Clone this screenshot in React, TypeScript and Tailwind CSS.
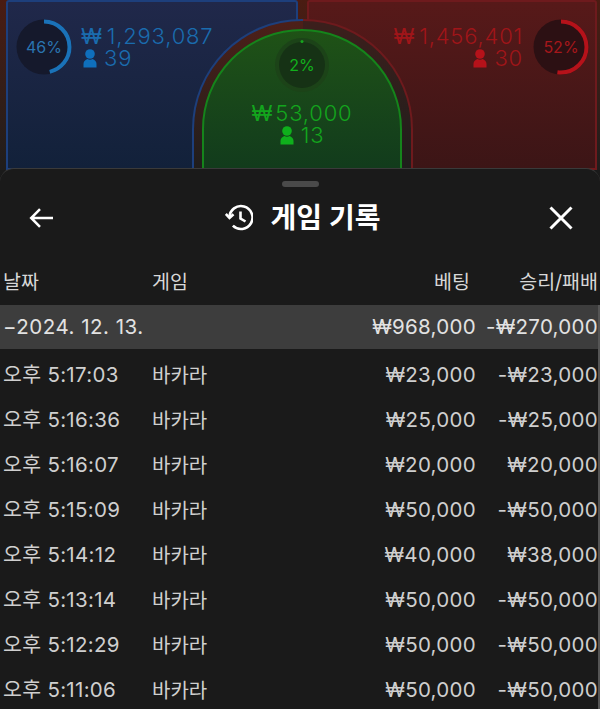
const rows = [
  ['오후 5:17:03', '₩23,000', '-₩23,000'],
  ['오후 5:16:36', '₩25,000', '-₩25,000'],
  ['오후 5:16:07', '₩20,000', '₩20,000'],
  ['오후 5:15:09', '₩50,000', '-₩50,000'],
  ['오후 5:14:12', '₩40,000', '₩38,000'],
  ['오후 5:13:14', '₩50,000', '-₩50,000'],
  ['오후 5:12:29', '₩50,000', '-₩50,000'],
  ['오후 5:11:06', '₩50,000', '-₩50,000'],
];

function Ring({ pct, color, track }: { pct: number; color: string; track: string }) {
  const r = 25.5;
  const c = 2 * Math.PI * r;
  return (
    <svg width="56" height="56" viewBox="0 0 56 56" className="block">
      <circle cx="28" cy="28" r="27.5" fill={track} />
      <circle
        cx="28"
        cy="28"
        r={r}
        fill="none"
        stroke={color}
        strokeWidth="4"
        strokeDasharray={`${(c * pct) / 100} ${c}`}
        transform="rotate(-90 28 28)"
      />
    </svg>
  );
}

function Person({ color }: { color: string }) {
  return (
    <svg width="14" height="19" viewBox="0 0 14 19" fill={color}>
      <circle cx="7" cy="5" r="4.8" />
      <path d="M0.5 18.5v-3.800c0-2.700 2.200-3.900 3.800-4.700 1.700 1 3.700 1 5.400 0 1.600.8 3.800 2 3.800 4.700v3.800z" />
    </svg>
  );
}

function Table() {
  return (
    <div className="relative h-[170px] overflow-hidden bg-gradient-to-b from-[#4a1c12] to-[#1f1d1c]">
      <div className="flex h-[170px] gap-[9px] pl-[6px] pr-[3px]">
        {/* blue zone */}
        <div className="flex-1 rounded-t-[3px] border-2 border-[#1d3f7c] bg-gradient-to-b from-[#20284a] to-[#12213a] pl-[8px] pt-[17px]">
          <div className="flex gap-[9px]">
            <div className="relative size-[56px]">
              <Ring pct={46} color="#1a72b8" track="#15192c" />
              <span className="absolute inset-0 flex items-center justify-center text-[16px] text-[#2a74b0]">46%</span>
            </div>
            <div className="mt-[6px] text-[22px] font-light leading-[22px] tracking-[0.8px] text-[#1a6cae]">
              <div className="whitespace-nowrap">
                <span className="mr-[4px] font-normal">₩</span>1,293,087
              </div>
              <div className="flex items-center gap-[7px] pl-[2px]">
                <Person color="#0f6fbc" />
                <span>39</span>
              </div>
            </div>
          </div>
        </div>
        {/* red zone */}
        <div className="flex flex-1 justify-end rounded-t-[3px] border-2 border-[#6e1a1d] bg-gradient-to-b from-[#571919] to-[#3c1516] pr-[6px] pt-[17px]">
          <div className="flex gap-[10px]">
            <div className="mt-[6px] text-right text-[22px] font-light leading-[22px] tracking-[0.8px] text-[#a01519]">
              <div className="whitespace-nowrap">
                <span className="mr-[4px] font-normal">₩</span>1,456,401
              </div>
              <div className="flex items-center justify-end gap-[7px]">
                <Person color="#b5121a" />
                <span>30</span>
              </div>
            </div>
            <div className="relative size-[56px]">
              <Ring pct={52} color="#b5121a" track="#2c1013" />
              <span className="absolute inset-0 flex items-center justify-center text-[16px] text-[#a5171b]">52%</span>
            </div>
          </div>
        </div>
      </div>
      {/* arch sits over both side zones */}
      <div className="absolute left-[192px] top-[19px] flex h-[151px] w-[221px]">
        <div className="h-full w-1/2 rounded-tl-[110px] border-l-2 border-t-2 border-[#1d3f7c] bg-gradient-to-b from-[#4d1f18] to-[#1f1d1c]" />
        <div className="h-full w-1/2 rounded-tr-[110px] border-r-2 border-t-2 border-[#6e1a1d] bg-gradient-to-b from-[#3c1f1c] to-[#1f1d1c]" />
        <div className="absolute left-[10px] top-[10px] flex h-[150px] w-[200px] flex-col items-center rounded-t-[100px] border-2 border-[#15841b] bg-gradient-to-b from-[#1f5216] to-[#113a1c]">
          <div className="relative mt-[7px] flex size-[54px] items-center justify-center rounded-full bg-[#1c4318]">
            <div className="flex size-[46px] items-center justify-center rounded-full bg-[#163215] text-[16px] text-[#12b01c]">2%</div>
            <span className="absolute left-1/2 top-[2px] size-[3px] -translate-x-1/2 rounded-full bg-[#16a51e]" />
          </div>
          <div className="mt-[10px] whitespace-nowrap text-[22px] font-light leading-[22px] tracking-[0.8px] text-[#13a51d]">
            <span className="mr-[2px] font-normal">₩</span>53,000
          </div>
          <div className="flex items-center gap-[7px] text-[22px] font-light leading-[22px] tracking-[0.8px] text-[#13a51d]">
            <Person color="#0fb01c" />
            <span>13</span>
          </div>
        </div>
      </div>
    </div>
  );
}

export default function App() {
  return (
    <div className="relative h-[709px] w-[600px] overflow-hidden bg-[#1a1a1a] font-['Inter','Noto_Sans_CJK_KR',sans-serif] text-white">
      <Table />
      <div className="absolute inset-x-0 top-[168px] bottom-0 rounded-t-[14px] border-t border-[#3a3a3a] bg-[#1a1a1a]">
        <div className="mx-auto mt-[12px] h-[6px] w-[37px] rounded-full bg-[#4a4a4a]" />
        <div className="flex h-[58px] items-center justify-between pl-[29px] pr-[27px] pt-[3px]">
          <svg width="24" height="20" viewBox="0 0 24 20" fill="none" stroke="#fff" strokeWidth="2.5">
            <path d="M24 10H2.500M11 1.200L2.200 10l8.800 8.800" />
          </svg>
          <div className="flex items-center gap-[17px] pl-[4px]">
            <svg width="28" height="27" viewBox="0 0 28 27" fill="none" stroke="#fff" strokeWidth="2.6">
              <path d="M4.500 13.500a11.500 11.500 0 1 1 3.400 8.200" />
              <path d="M0.800 10l3.700 4 4-3.700" />
              <path d="M15.500 7.500v7l5 3" />
            </svg>
            <span className="text-[28px] font-semibold leading-none">게임 기록</span>
          </div>
          <svg width="24" height="24" viewBox="0 0 24 24" fill="none" stroke="#fff" strokeWidth="3">
            <path d="M1.500 1.500l21 21M22.500 1.500l-21 21" />
          </svg>
        </div>
        <div className="mt-[15px] grid h-[45px] grid-cols-[149px_1fr_120px_122px] items-center pl-[3px] pr-[2px] text-[19.500px] text-[#d8d8d8]">
          <span>날짜</span>
          <span>게임</span>
          <span className="pr-[6px] text-right">베팅</span>
          <span className="whitespace-nowrap text-right">승리/패배</span>
        </div>
        <div className="grid h-[44px] grid-cols-[149px_1fr_120px_122px] items-center bg-[#3d3d3d] pl-[3px] pr-[2px] text-[20.5px] tracking-[0.3px] text-[#e2e2e2]">
          <span className="whitespace-nowrap tracking-[0.5px]">−2024. 12. 13.</span>
          <span />
          <span className="whitespace-nowrap text-right">₩968,000</span>
          <span className="whitespace-nowrap text-right">-₩270,000</span>
        </div>
        <div className="pt-[4px]">
          {rows.map(([time, bet, result]) => (
            <div key={time} className="grid h-[45px] grid-cols-[149px_1fr_120px_122px] items-center pl-[3px] pr-[2px] text-[20.5px] tracking-[0.3px] text-[#cfcfcf]">
              <span className="whitespace-nowrap">{time}</span>
              <span className="text-[20px] tracking-normal">바카라</span>
              <span className="whitespace-nowrap text-right">{bet}</span>
              <span className="whitespace-nowrap text-right">{result}</span>
            </div>
          ))}
        </div>
        {/* scrollbar */}
        <div className="absolute bottom-0 right-0 top-[136px] w-[2px] bg-[#555555]" />
      </div>
    </div>
  );
}
